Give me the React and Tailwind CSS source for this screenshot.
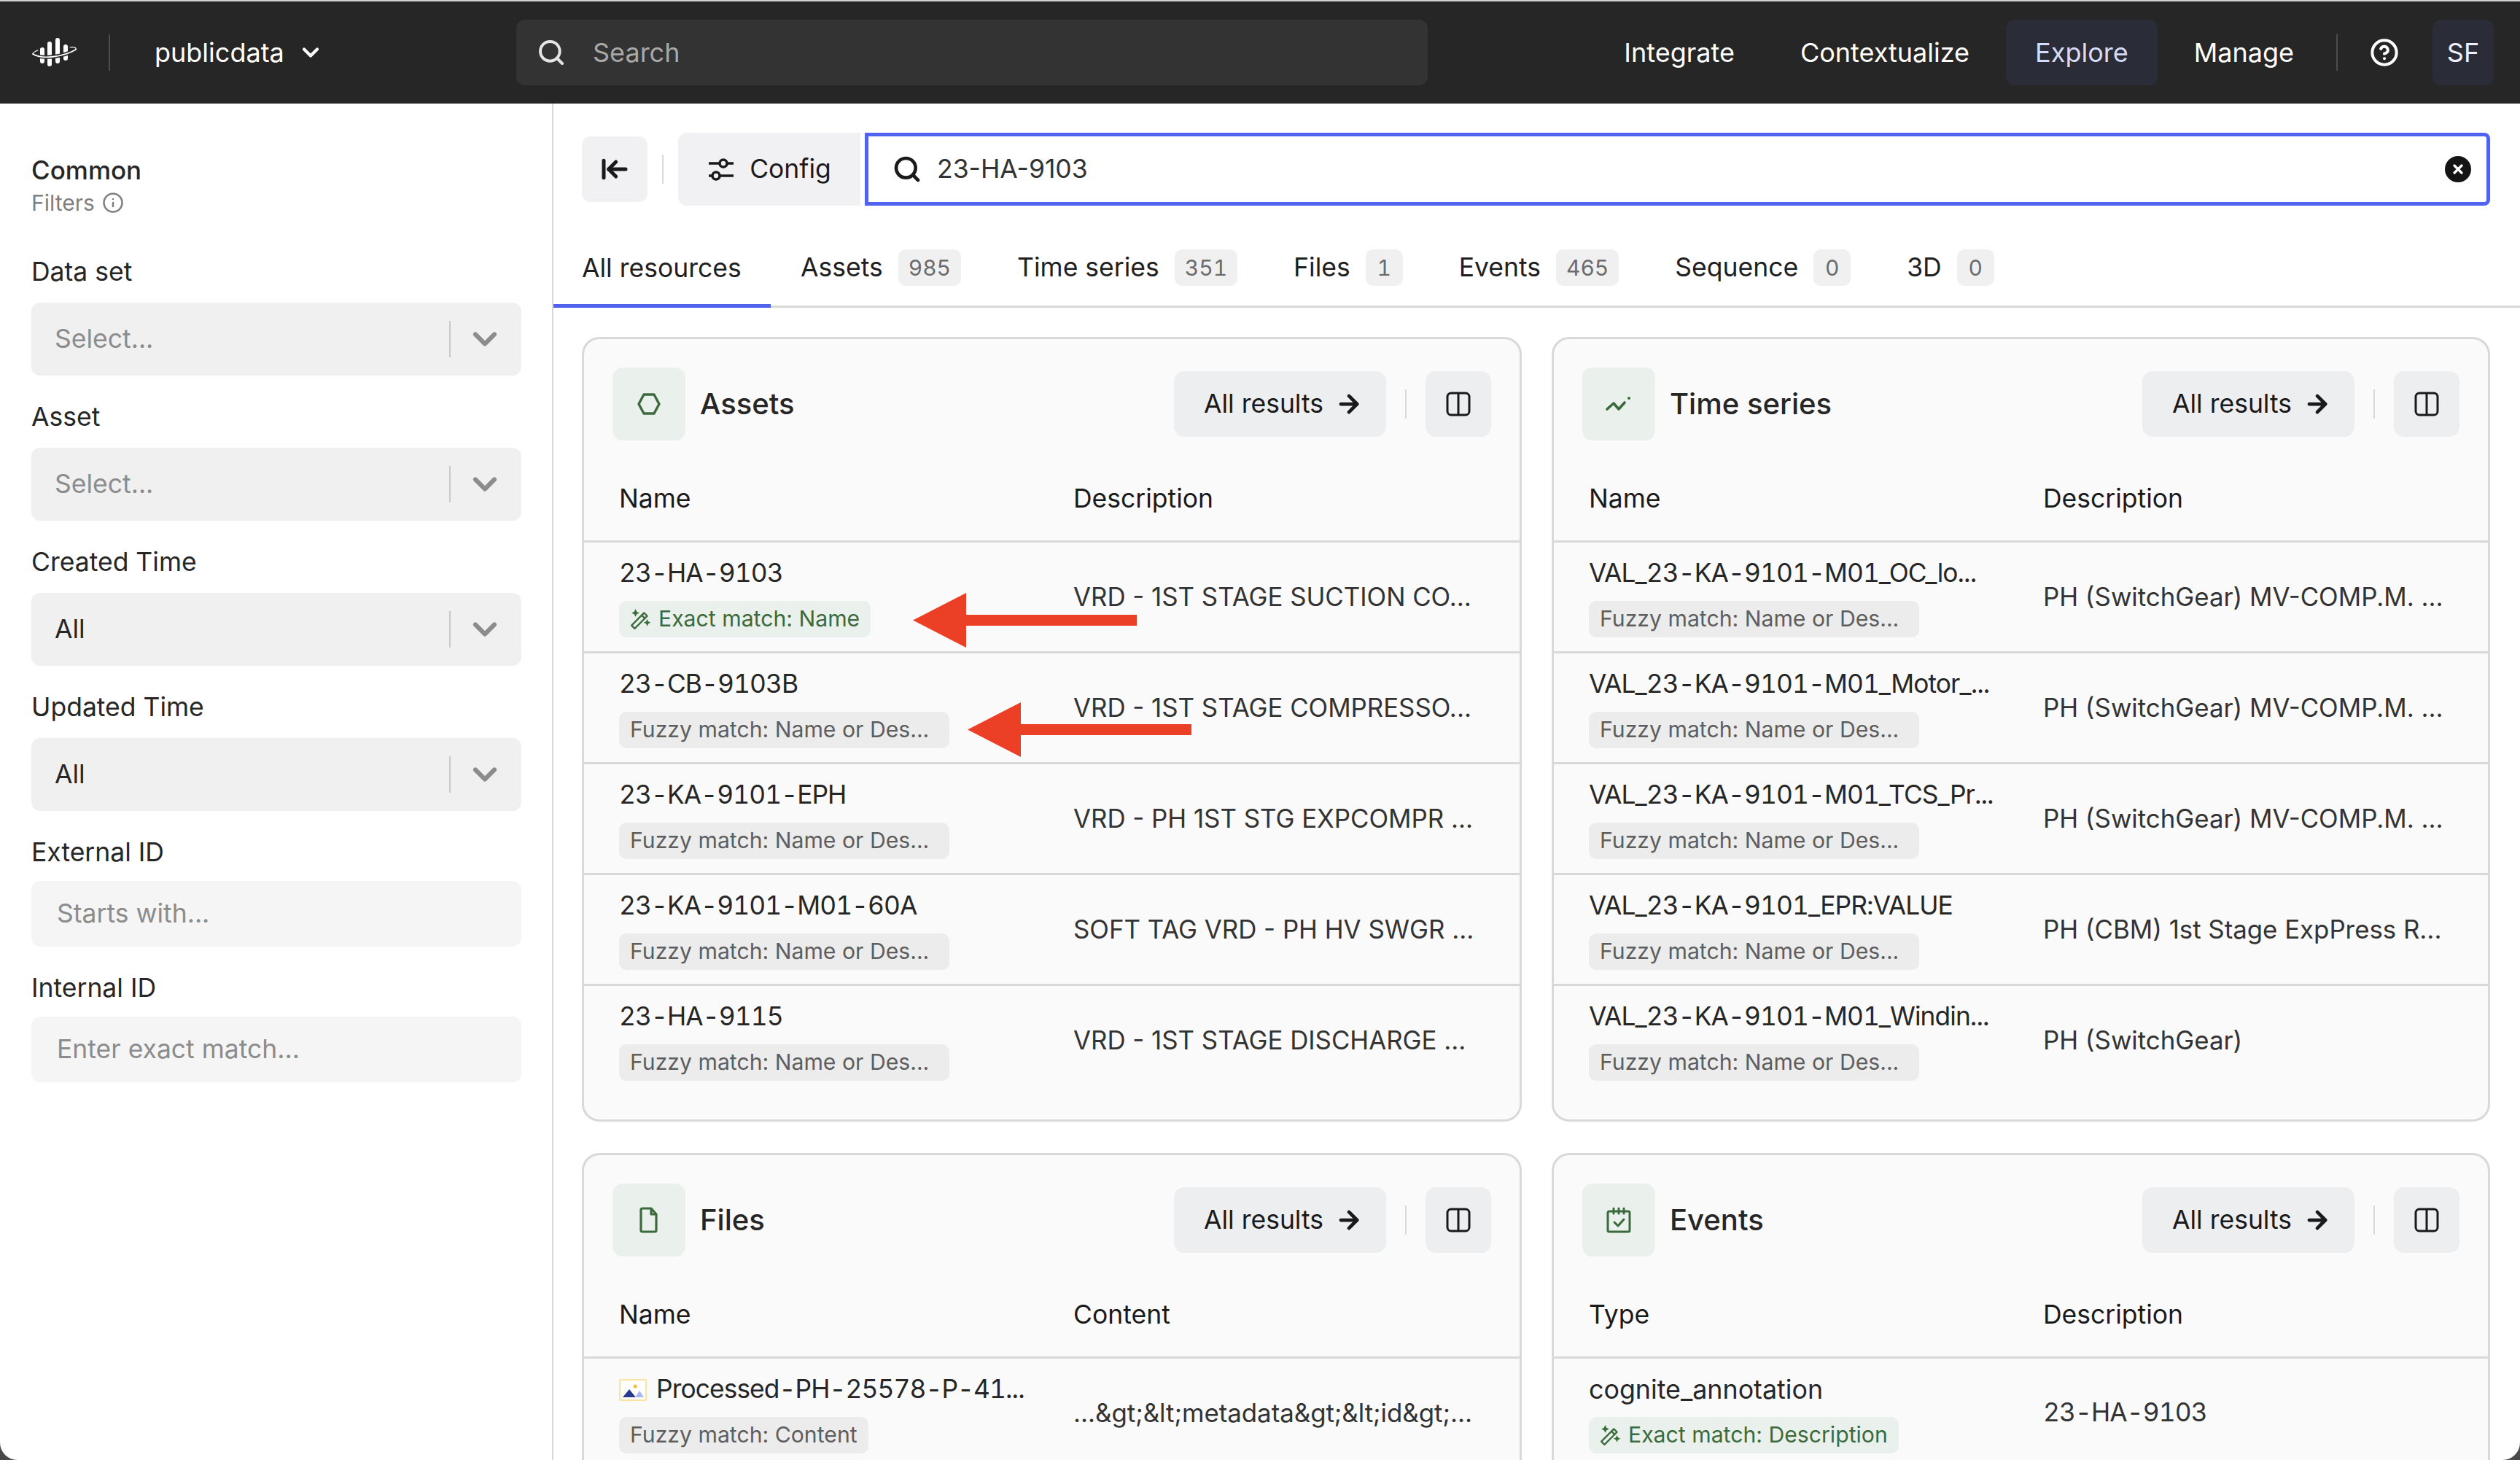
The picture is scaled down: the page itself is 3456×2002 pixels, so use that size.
import React from "react";
import { ArrowLeftToLine, ArrowRight, ChevronDown, CircleHelp, Info, Search } from "lucide-react";

const font = "font-['Inter','Liberation_Sans',sans-serif]";

function Logo() {
  return (
    <svg width="64" height="44" viewBox="0 0 64 44" fill="none" strokeLinecap="round">
      <path d="M16 18v16M26 10v28M37 5v29M48 14v16" stroke="#fff" strokeWidth="6" />
      <path d="M3 24C15 32 45 28 62 18" stroke="#262626" strokeWidth="5" />
      <path d="M3 24C15 32 45 28 62 18" stroke="#fff" strokeWidth="1.8" />
      <path d="M3 24c1-3 4-4 7-5M54 15c5-1 9 0 8 3" stroke="#fff" strokeWidth="1.2" />
    </svg>
  );
}

function WandIcon() {
  return (
    <svg width="30" height="30" viewBox="0 0 28 28" fill="none" stroke="currentColor" strokeWidth="2.2" strokeLinejoin="round" className="shrink-0">
      <path d="M2 22 18 6l4 4L6 26l-4-4Z" />
      <path d="M15 9l4 4" />
      <path d="M7 1l1.6 3.4L12 6 8.6 7.6 7 11 5.4 7.6 2 6l3.4-1.6L7 1ZM22 14l1.4 3.1 3.1 1.4-3.1 1.4L22 23l-1.4-3.1-3.1-1.4 3.1-1.4L22 14Z" fill="currentColor" stroke="none" />
    </svg>
  );
}

function SlidersIcon() {
  return (
    <svg width="36" height="36" viewBox="0 0 36 36" fill="none" stroke="#1a1a1a" strokeWidth="3.6">
      <path d="M2 10h34M2 27h34" />
      <circle cx="22" cy="10" r="5" fill="#f1f1f3" />
      <circle cx="12" cy="27" r="5" fill="#f1f1f3" />
    </svg>
  );
}

function Hexagon() {
  return (
    <svg width="34" height="34" viewBox="0 0 34 34" fill="none" stroke="#3b6b3c" strokeWidth="3.4" strokeLinejoin="round">
      <path d="M10 4h14l7 13-7 13H10L3 17 10 4Z" />
    </svg>
  );
}

function TrendIcon() {
  return (
    <svg width="36" height="36" viewBox="0 0 36 36" fill="none" stroke="#3b6b3c" strokeWidth="3.6" strokeLinecap="round" strokeLinejoin="round">
      <path d="M2 25l9-8 7 8 8-9" />
      <circle cx="32" cy="10" r="2" fill="#3b6b3c" stroke="none" />
    </svg>
  );
}

function FileIcon() {
  return (
    <svg width="36" height="36" viewBox="0 0 36 36" fill="none" stroke="#3b6b3c" strokeWidth="3.2" strokeLinejoin="round">
      <path d="M9 2h12l7 8v22a2 2 0 0 1-2 2H9a2 2 0 0 1-2-2V4a2 2 0 0 1 2-2Z" />
      <path d="M21 2v8h7" />
    </svg>
  );
}

function CalendarIcon() {
  return (
    <svg width="36" height="36" viewBox="0 0 36 36" fill="none" stroke="#3b6b3c" strokeWidth="3" strokeLinecap="round" strokeLinejoin="round">
      <rect x="3" y="6" width="30" height="28" rx="2" />
      <path d="M11 2v7M18 2v7M25 2v7M12 21l5 5 8-9" />
    </svg>
  );
}

function PanelIcon() {
  return (
    <svg width="36" height="36" viewBox="0 0 36 36" fill="none" stroke="#1a1a1a" strokeWidth="3">
      <rect x="3" y="3" width="30" height="30" rx="5" />
      <path d="M18 3v30" />
    </svg>
  );
}

function ImageFileIcon() {
  return (
    <svg width="38" height="30" viewBox="0 0 38 30" className="shrink-0">
      <rect x="1" y="1" width="36" height="28" rx="1" fill="#fff" stroke="#fbe3a0" strokeWidth="2" />
      <circle cx="22" cy="10" r="2.5" fill="#f7b93e" />
      <path d="M5 25 14 14l9 11H5Z" fill="#2a3a8c" />
      <path d="M22 25l6-9 6 9H22Z" fill="#a9b6f2" />
    </svg>
  );
}

function NavItem({ label, active }) {
  return (
    <div className={`h-[90px] flex items-center rounded-[12px] px-[40px] ${active ? "bg-[#2a2d38] text-[#d6dcfb]" : "text-white"}`}>
      {label}
    </div>
  );
}

function Header() {
  return (
    <div className="h-[142px] shrink-0 border-t-2 border-[#cfd2cf] bg-[#262626] flex items-center pl-[42px] pr-[36px] text-[36px] text-white">
      <Logo />
      <div className="w-[2px] h-[50px] bg-[#4c4c4c] ml-[43px]" />
      <div className="ml-[61px] flex items-center gap-[18px] w-[226px]">
        publicdata
        <ChevronDown size={36} strokeWidth={2.8} className="shrink-0" />
      </div>
      <div className="ml-[270px] w-[1250px] h-[90px] rounded-[12px] bg-[#333333] flex items-center pl-[28px] text-[#a8a8a8]">
        <Search size={40} strokeWidth={2.4} color="#e4e4e4" />
        <span className="ml-[37px]">Search</span>
      </div>
      <div className="ml-auto flex items-center">
        <div className="flex items-center gap-[10px]">
          <NavItem label="Integrate" />
          <NavItem label="Contextualize" />
          <NavItem label="Explore" active />
          <NavItem label="Manage" />
        </div>
        <div className="w-[2px] h-[50px] bg-[#4c4c4c] ml-[18px]" />
        <CircleHelp size={40} strokeWidth={2.4} className="ml-[44px]" />
        <div className="ml-[46px] w-[84px] h-[90px] rounded-[12px] bg-[#2a2d38] flex items-center justify-center text-[#eef0fd]">SF</div>
      </div>
    </div>
  );
}

function Select({ label, value, placeholder }) {
  return (
    <div>
      <div className="h-[46px] leading-[46px] text-[35.5px] text-[#262626]">{label}</div>
      <div className="mt-[19px] h-[100px] rounded-[12px] bg-[#f0f0f0] flex items-center pl-[32px] text-[35.5px]">
        <span className={`flex-1 ${placeholder ? "text-[#8c8c8c]" : "text-[#262626]"}`}>{value}</span>
        <div className="w-[2px] h-[50px] bg-[#c9c9c9]" />
        <div className="w-[97px] pl-[21px] flex">
          <ChevronDown size={52} strokeWidth={2.8} color="#8c8c8c" />
        </div>
      </div>
    </div>
  );
}

function TextInput({ label, placeholder }) {
  return (
    <div>
      <div className="h-[46px] leading-[46px] text-[35.5px] text-[#262626]">{label}</div>
      <div className="mt-[16px] h-[90px] rounded-[12px] bg-[#f5f5f5] flex items-center pl-[35px] text-[35.5px] text-[#8c8c8c]">{placeholder}</div>
    </div>
  );
}

function Sidebar() {
  return (
    <aside className="w-[759px] shrink-0 border-r-2 border-[#d9d9d9] pl-[43px] pr-[42px] pt-[68px]">
      <div className="h-[46px] leading-[46px] text-[35px] font-medium text-[#262626]">Common</div>
      <div className="flex items-center gap-[10px] h-[44px] text-[30px] text-[#7f7f7f]">
        Filters <Info size={30} strokeWidth={2} />
      </div>
      <div className="mt-[50px] flex flex-col gap-[34px]">
        <Select label="Data set" value="Select..." placeholder />
        <Select label="Asset" value="Select..." placeholder />
        <Select label="Created Time" value="All" />
        <Select label="Updated Time" value="All" />
        <TextInput label="External ID" placeholder="Starts with..." />
        <TextInput label="Internal ID" placeholder="Enter exact match..." />
      </div>
    </aside>
  );
}

function Toolbar() {
  return (
    <div className="flex items-center pl-[39px] pr-[41px] pt-[40px]">
      <div className="w-[90px] h-[90px] rounded-[12px] bg-[#f1f1f3] flex items-center justify-center">
        <ArrowLeftToLine size={40} strokeWidth={3} color="#1a1a1a" />
      </div>
      <div className="w-[2px] h-[40px] bg-[#d9d9d9] mx-[20px]" />
      <div className="w-[250px] h-[100px] rounded-l-[12px] bg-[#f1f1f3] flex items-center justify-center gap-[22px] text-[35.5px] text-[#1a1a1a]">
        <SlidersIcon />
        Config
      </div>
      <div className="ml-[6px] flex-1 h-[100px] rounded-r-[8px] border-[5px] border-[#4f63f0] flex items-center pl-[33px] pr-[21px] text-[35.5px] text-[#333333]">
        <Search size={40} strokeWidth={2.8} color="#1a1a1a" />
        <span className="ml-[21px] flex-1">23-HA-9103</span>
        <div className="w-[36px] h-[36px] rounded-full bg-[#141414] text-white flex items-center justify-center">
          <svg width="18" height="18" viewBox="0 0 18 18" stroke="#fff" strokeWidth="3.4" strokeLinecap="round">
            <path d="M4 4l10 10M14 4 4 14" />
          </svg>
        </div>
      </div>
    </div>
  );
}

function Tab({ label, count }) {
  return (
    <div className="flex items-center gap-[21px] text-[35.5px] text-[#1f1f1f]">
      {label}
      <span className="h-[50px] min-w-[51px] justify-center rounded-[10px] bg-[#f0f0f0] px-[14px] flex items-center text-[30px] text-[#6b6b6b] tabular-nums">{count}</span>
    </div>
  );
}

function Tabs() {
  return (
    <div className="mt-[50px] h-[90px] border-b-[3px] border-[#d9d9d9] flex items-start">
      <div className="h-[90px] w-[298px] shrink-0 border-b-[5px] border-[#4f63f0] pl-[39px] pt-[11px] text-[35.5px] text-[#1f1f1f]">
        <div className="h-[50px] flex items-center">All resources</div>
      </div>
      <div className="flex items-center h-[50px] mt-[10px] ml-[41px] gap-[77px]">
        <Tab label="Assets" count="985" />
        <Tab label="Time series" count="351" />
        <Tab label="Files" count="1" />
        <Tab label="Events" count="465" />
        <Tab label="Sequence" count="0" />
        <Tab label="3D" count="0" />
      </div>
    </div>
  );
}

function MatchBadge({ exact, text }) {
  return (
    <div className={`inline-flex h-[50px] items-center gap-[9px] rounded-[10px] pl-[15px] text-[30.2px] ${text.endsWith("...") ? "pr-[28px]" : "pr-[15px]"} ${exact ? "bg-[#eaf0ec] text-[#3b6b3c]" : "bg-[#ececec] text-[#5e5e5e]"}`}>
      {exact && <WandIcon />}
      {text}
    </div>
  );
}

// names and ids with digits run wider than plain text in the reference
const NUMERIC = "text-[35.3px] tabular-nums tracking-[-0.9px]";
const PLAIN = "text-[35.8px]";

function Row({ name, match, exact, desc, fileIcon, plainName, numericDesc }) {
  return (
    <div className="h-[152px] border-t-[3px] border-[#d9d9d9] flex items-center pl-[48px]">
      <div className="w-[623px] shrink-0">
        <div className={`flex items-center gap-[13px] h-[46px] mb-[14px] text-[#262626] whitespace-nowrap ${plainName ? PLAIN : NUMERIC}`}>
          {fileIcon && <ImageFileIcon />}
          {name}
        </div>
        <MatchBadge exact={exact} text={match} />
      </div>
      <div className={`text-[#333333] whitespace-nowrap ${numericDesc ? NUMERIC : "text-[34.8px]"}`}>{desc}</div>
    </div>
  );
}

function Card({ icon, title, col1, col2, rows, cls }) {
  return (
    <section className={`rounded-[24px] border-[3px] border-[#d9d9d9] bg-[#fafafa] overflow-hidden ${cls}`}>
      <div className="flex items-center h-[100px] mt-[39px] pl-[39px] pr-[39px]">
        <div className="w-[100px] h-[100px] rounded-[14px] bg-[#eaf0ec] flex items-center justify-center">{icon}</div>
        <div className="ml-[20px] text-[40px] font-medium text-[#262626]">{title}</div>
        <div className="ml-auto w-[291px] h-[90px] rounded-[14px] bg-[#edeef0] flex items-center pl-[41px] gap-[16px] text-[35.5px] text-[#1a1a1a]">
          All results <ArrowRight size={38} strokeWidth={3} />
        </div>
        <div className="w-[2px] h-[40px] bg-[#d9d9d9] mx-[26px]" />
        <div className="w-[90px] h-[90px] rounded-[14px] bg-[#edeef0] flex items-center justify-center"><PanelIcon /></div>
      </div>
      <div className="flex items-center h-[137px] pt-[22px] pl-[48px] text-[35.5px] text-[#1a1a1a]">
        <div className="w-[623px]">{col1}</div>
        <div>{col2}</div>
      </div>
      {rows.map((r) => <Row key={r.name} {...r} />)}
    </section>
  );
}

const FUZZY = "Fuzzy match: Name or Des...";

const assets = [
  { name: "23-HA-9103", match: "Exact match: Name", exact: true, desc: "VRD - 1ST STAGE SUCTION CO..." },
  { name: "23-CB-9103B", match: FUZZY, desc: "VRD - 1ST STAGE COMPRESSO..." },
  { name: "23-KA-9101-EPH", match: FUZZY, desc: "VRD - PH 1ST STG EXPCOMPR ..." },
  { name: "23-KA-9101-M01-60A", match: FUZZY, desc: "SOFT TAG VRD - PH HV SWGR ..." },
  { name: "23-HA-9115", match: FUZZY, desc: "VRD - 1ST STAGE DISCHARGE ..." },
];

const timeseries = [
  { name: "VAL_23-KA-9101-M01_OC_lo...", match: FUZZY, desc: "PH (SwitchGear) MV-COMP.M. ..." },
  { name: "VAL_23-KA-9101-M01_Motor_...", match: FUZZY, desc: "PH (SwitchGear) MV-COMP.M. ..." },
  { name: "VAL_23-KA-9101-M01_TCS_Pr...", match: FUZZY, desc: "PH (SwitchGear) MV-COMP.M. ..." },
  { name: "VAL_23-KA-9101_EPR:VALUE", match: FUZZY, desc: "PH (CBM) 1st Stage ExpPress R..." },
  { name: "VAL_23-KA-9101-M01_Windin...", match: FUZZY, desc: "PH (SwitchGear)" },
];

const files = [
  { name: "Processed-PH-25578-P-41...", match: "Fuzzy match: Content", desc: "...&gt;&lt;metadata&gt;&lt;id&gt;...", fileIcon: true },
];

const events = [
  { name: "cognite_annotation", match: "Exact match: Description", exact: true, desc: "23-HA-9103", plainName: true, numericDesc: true },
];

function Arrow({ cls }) {
  return (
    <svg width="307" height="75" viewBox="0 0 307 75" className={`absolute ${cls}`}>
      <path d="M0 37.5 73 0v30h234v15H73v30L0 37.5Z" fill="#eb4025" />
    </svg>
  );
}

export default function App() {
  return (
    <div className={`w-[3456px] h-[2002px] bg-[#4a4a4a] ${font}`}>
      <div className="relative w-full h-full overflow-hidden rounded-b-[24px] bg-white flex flex-col">
        <Header />
        <div className="flex flex-1 min-h-0">
          <Sidebar />
          <main className="flex-1 min-w-0">
            <Toolbar />
            <Tabs />
            <div className="grid grid-cols-[1289px_1287px] gap-x-[41px] gap-y-[43px] pl-[39px] pt-[40px]">
              <Card title="Assets" icon={<Hexagon />} col1="Name" col2="Description" rows={assets} cls="h-[1076px]" />
              <Card title="Time series" icon={<TrendIcon />} col1="Name" col2="Description" rows={timeseries} cls="h-[1076px]" />
              <Card title="Files" icon={<FileIcon />} col1="Name" col2="Content" rows={files} cls="h-[600px]" />
              <Card title="Events" icon={<CalendarIcon />} col1="Type" col2="Description" rows={events} cls="h-[600px]" />
            </div>
          </main>
        </div>
        {/* red annotation arrows on top of the table */}
        <Arrow cls="left-[1252px] top-[813px]" />
        <Arrow cls="left-[1327px] top-[963px]" />
      </div>
    </div>
  );
}
